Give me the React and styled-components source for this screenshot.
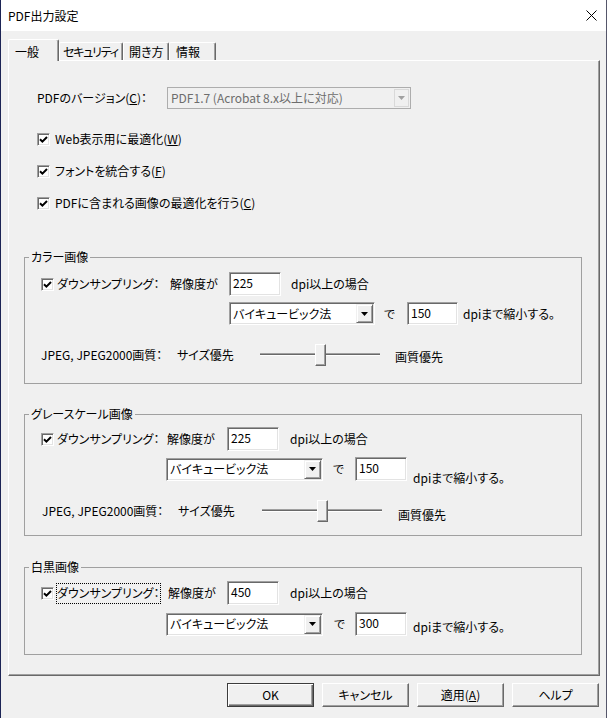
import React from 'react'
import styled, { createGlobalStyle, css } from 'styled-components'

const GlobalStyle = createGlobalStyle`
  html, body { margin: 0; padding: 0; background: #f0f0f0; }
  body {
    font-family: "Noto Sans CJK JP", "Noto Sans", sans-serif;
    font-size: 12px;
    line-height: 16px;
    color: #000;
    font-feature-settings: "palt";
  }
  *, *::before, *::after { box-sizing: border-box; }
`

const Window = styled.div`
  width: 607px;
  height: 718px;
  background: #f0f0f0;
  border-left: 1px solid #1c2455;
  border-right: 1px solid #55566a;
  display: flex;
  flex-direction: column;
  overflow: hidden;
`

const TitleBar = styled.div`
  flex: 0 0 31px;
  background: #fff;
  display: flex;
  align-items: center;
  justify-content: space-between;
  padding: 0 9px 0 7px;
`

const Body = styled.div`
  flex: 1;
  padding: 8px 6px 0 7px;
  display: flex;
  flex-direction: column;
`

const TabStrip = styled.div`
  display: flex;
  align-items: flex-end;
  height: 21px;
`

const Tab = styled.div`
  position: relative;
  z-index: ${p => (p.$active ? 2 : 1)};
  width: ${p => p.$w}px;
  height: ${p => (p.$active ? 22 : 18)}px;
  margin-bottom: ${p => (p.$active ? -1 : 0)}px;
  padding: ${p => (p.$active ? 4 : 1)}px 0 0 ${p => p.$pad}px;
  letter-spacing: ${p => p.$ls || 0}px;
  background: #f0f0f0;
  border-top: 1px solid #fff;
  border-left: 1px solid #fff;
  border-right: 1px solid #696969;
  box-shadow: inset -1px 0 0 #a0a0a0;
  border-radius: 2px 2px 0 0;
  white-space: nowrap;
`

const Panel = styled.div`
  height: 616px;
  border-top: 1px solid #fff;
  border-left: 1px solid #fff;
  border-right: 1px solid #696969;
  border-bottom: 1px solid #696969;
  box-shadow: inset -1px -1px 0 #a0a0a0;
  padding: 26px 0 0 15px;
  display: flex;
  flex-direction: column;
  align-items: flex-start;
`

const VersionRow = styled.div`
  display: flex;
  align-items: center;
  height: 22px;
  margin-left: 13px;
`

const Text = styled.span`
  flex: 0 0 ${p => (p.$w ? `${p.$w}px` : 'auto')};
  margin-left: ${p => p.$ml || 0}px;
  margin-top: ${p => p.$drop || 0}px;
  white-space: nowrap;
  ${p => p.$cover && css`
    height: 22px;
    display: flex;
    align-items: center;
    background: #f0f0f0;
  `}
`

const Combo = styled.div`
  width: ${p => p.$w}px;
  height: ${p => p.$h}px;
  display: flex;
  align-items: stretch;
  ${p => p.$disabled ? css`
    background: #f0f0f0;
    border: 1px solid #adadad;
    color: #6d6d6d;
  ` : css`
    background: #fff;
    border: 1px solid;
    border-color: #a0a0a0 #fff #fff #a0a0a0;
    box-shadow: inset 1px 1px 0 #696969, inset -1px -1px 0 #e3e3e3;
    padding: 1px;
  `}
`

const ComboText = styled.span`
  flex: 1;
  display: flex;
  align-items: center;
  padding-left: ${p => p.$pl}px;
  white-space: nowrap;
  overflow: hidden;
`

const ComboButton = styled.span`
  flex: 0 0 ${p => p.$w}px;
  display: flex;
  align-items: center;
  justify-content: center;
  background: #f0f0f0;
  ${p => p.$disabled ? css`
    margin: 1px;
    border: 1px solid #d9d9d9;
  ` : css`
    border: 1px solid;
    border-color: #f0f0f0 #696969 #696969 #f0f0f0;
    box-shadow: inset 1px 1px 0 #fff, inset -1px -1px 0 #a0a0a0;
  `}
`

const CheckList = styled.div`
  display: flex;
  flex-direction: column;
  gap: 16px;
  margin: 22px 0 0 13px;
`

const CheckRow = styled.label`
  display: flex;
  align-items: center;
  gap: ${p => p.$gap}px;
  height: 16px;
  flex: 0 0 ${p => (p.$w ? `${p.$w}px` : 'auto')};
  white-space: nowrap;
`

const Box = styled.span`
  flex: 0 0 13px;
  width: 13px;
  height: 13px;
  display: flex;
  align-items: center;
  justify-content: center;
  background: #fff;
  border: 1px solid;
  border-color: #a0a0a0 #fff #fff #a0a0a0;
  box-shadow: inset 1px 1px 0 #696969, inset -1px -1px 0 #e3e3e3;
`

const Focus = styled.span`
  outline: 1px dotted #000;
  outline-offset: 0;
  padding: 1px 1px 2px 0;
`

const Group = styled.fieldset`
  width: 558px;
  min-width: 0;
  margin: ${p => p.$mt}px 0 0 0;
  padding: 0;
  border: 1px solid #a0a0a0;
`

const Legend = styled.legend`
  margin-left: 4px;
  padding: 0 2px;
  line-height: 16px;
`

const GroupBody = styled.div`
  padding: ${p => p.$pt}px 0 ${p => p.$pb}px 16px;
`

const Row = styled.div`
  display: flex;
  align-items: center;
  height: ${p => p.$h}px;
  margin-top: ${p => p.$mt || 0}px;
  padding-left: ${p => p.$indent || 0}px;
`

const Field = styled.div`
  flex: 0 0 ${p => p.$w}px;
  height: ${p => p.$h}px;
  background: #fff;
  border: 1px solid;
  border-color: #a0a0a0 #fff #fff #a0a0a0;
  box-shadow: inset 1px 1px 0 #696969, inset -1px -1px 0 #e3e3e3;
  padding: 2px 0 0 3px;
  line-height: 16px;
`

const Track = styled.div`
  flex: 0 0 120px;
  height: 22px;
  display: flex;
  background: linear-gradient(
    to bottom,
    transparent 9px,
    #a0a0a0 9px, #a0a0a0 10px,
    #696969 10px, #696969 11px,
    #fff 11px, #fff 12px,
    transparent 12px
  );
`

const Thumb = styled.div`
  width: 11px;
  height: 22px;
  margin-left: 55px;
  background: #f0f0f0;
  border: 1px solid;
  border-color: #fff #696969 #696969 #fff;
  box-shadow: inset -1px -1px 0 #a0a0a0;
`

const ButtonRow = styled.div`
  display: flex;
  justify-content: flex-end;
  gap: 8px;
  margin-top: 7px;
  padding-right: 1px;
`

const Btn = styled.button`
  width: 87px;
  height: 24px;
  padding: 0;
  font: inherit;
  color: #000;
  background: #f0f0f0;
  border: 1px solid;
  border-color: #fff #696969 #696969 #fff;
  box-shadow: inset -1px -1px 0 #a0a0a0;
  ${p => p.$default && css`
    border-color: #3c3c3c;
    box-shadow: inset 1px 1px 0 #fff, inset -1px -1px 0 #696969, inset -2px -2px 0 #a0a0a0;
  `}
`

const Arrow = ({ color = '#000' }) => (
  <svg width="7" height="4" viewBox="0 0 7 4">
    <polygon points="0,0 7,0 3.5,4" fill={color} />
  </svg>
)

const Check = () => (
  <Box>
    <svg width="9" height="9" viewBox="0 0 9 9">
      <path d="M1 4.2 L3.4 6.6 L8 2" fill="none" stroke="#000" strokeWidth="2" />
    </svg>
  </Box>
)

const Select = ({ w, h = 23, children }) => (
  <Combo $w={w} $h={h}>
    <ComboText $pl={2}>{children}</ComboText>
    <ComboButton $w={17}><Arrow /></ComboButton>
  </Combo>
)

const Slider = () => (
  <Track>
    <Thumb />
  </Track>
)

const tabs = [
  { label: '一般', w: 51, pad: 6, active: true },
  { label: 'セキュリティ', w: 64, pad: 3, ls: -1.2 },
  { label: '開き方', w: 46, pad: 5 },
  { label: '情報', w: 47, pad: 6 },
]

const App = () => {
  return (
    <>
      <GlobalStyle />
      <Window>
        <TitleBar>
          <span>PDF出力設定</span>
          <svg width="11" height="11" viewBox="0 0 11 11">
            <path d="M0.5 0.5 L10.5 10.5 M10.5 0.5 L0.5 10.5" stroke="#000" strokeWidth="1" />
          </svg>
        </TitleBar>

        <Body>
          <TabStrip>
            {tabs.map(t => (
              <Tab key={t.label} $w={t.w} $pad={t.pad} $ls={t.ls} $active={t.active}>{t.label}</Tab>
            ))}
          </TabStrip>

          <Panel>
            <VersionRow>
              <Text $w={130}>PDFのバージョン(<u>C</u>)：</Text>
              <Combo $w={244} $h={22} $disabled>
                <ComboText $pl={3}>PDF1.7 (Acrobat 8.x以上に対応)</ComboText>
                <ComboButton $w={15} $disabled><Arrow color="#a0a0a0" /></ComboButton>
              </Combo>
            </VersionRow>

            <CheckList>
              <CheckRow $gap={5}><Check /><span>Web表示用に最適化(<u>W</u>)</span></CheckRow>
              <CheckRow $gap={5}><Check /><span>フォントを統合する(<u>F</u>)</span></CheckRow>
              <CheckRow $gap={5}><Check /><span>PDFに含まれる画像の最適化を行う(<u>C</u>)</span></CheckRow>
            </CheckList>

            {/* カラー画像 */}
            <Group $mt={38}>
              <Legend>カラー画像</Legend>
              <GroupBody $pt={7} $pb={17}>
                <Row $h={24}>
                  <CheckRow $gap={3} $w={129}><Check /><span>ダウンサンプリング：</span></CheckRow>
                  <Text $w={59}>解像度が</Text>
                  <Field $w={52} $h={24}>225</Field>
                  <Text $ml={10}>dpi以上の場合</Text>
                </Row>
                <Row $h={23} $mt={6} $indent={188}>
                  <Select w={158}>バイキュービック法</Select>
                  <Text $w={23} $ml={9}>で</Text>
                  <Field $w={51} $h={23}>150</Field>
                  <Text $w={118} $ml={5} $cover>dpiまで縮小する。</Text>
                </Row>
                <Row $h={22} $mt={19}>
                  <Text $w={136}>JPEG, JPEG2000画質：</Text>
                  <Text $w={83}>サイズ優先</Text>
                  <Slider />
                  <Text $ml={15} $drop={4}>画質優先</Text>
                </Row>
              </GroupBody>
            </Group>

            {/* グレースケール画像 */}
            <Group $mt={22}>
              <Legend>グレースケール画像</Legend>
              <GroupBody $pt={5} $pb={13}>
                <Row $h={24}>
                  <CheckRow $gap={3} $w={126}><Check /><span>ダウンサンプリング：</span></CheckRow>
                  <Text $w={60}>解像度が</Text>
                  <Field $w={52} $h={24}>225</Field>
                  <Text $ml={11}>dpi以上の場合</Text>
                </Row>
                <Row $h={24} $mt={6} $indent={125}>
                  <Select w={157}>バイキュービック法</Select>
                  <Text $w={22} $ml={10}>で</Text>
                  <Field $w={52} $h={24}>150</Field>
                  <Text $ml={6} $drop={18}>dpiまで縮小する。</Text>
                </Row>
                <Row $h={22} $mt={19}>
                  <Text $w={136} $ml={1}>JPEG, JPEG2000画質：</Text>
                  <Text $w={84}>サイズ優先</Text>
                  <Slider />
                  <Text $ml={16} $drop={8}>画質優先</Text>
                </Row>
              </GroupBody>
            </Group>

            {/* 白黒画像 */}
            <Group $mt={23}>
              <Legend>白黒画像</Legend>
              <GroupBody $pt={6} $pb={18}>
                <Row $h={24}>
                  <CheckRow $gap={3} $w={127}><Check /><Focus>ダウンサンプリング：</Focus></CheckRow>
                  <Text $w={59}>解像度が</Text>
                  <Field $w={52} $h={24}>450</Field>
                  <Text $ml={11}>dpi以上の場合</Text>
                </Row>
                <Row $h={24} $mt={7} $indent={125}>
                  <Select w={157}>バイキュービック法</Select>
                  <Text $w={21} $ml={11}>で</Text>
                  <Field $w={52} $h={24}>300</Field>
                  <Text $ml={6} $drop={6}>dpiまで縮小する。</Text>
                </Row>
              </GroupBody>
            </Group>
          </Panel>

          <ButtonRow>
            <Btn $default>OK</Btn>
            <Btn>キャンセル</Btn>
            <Btn>適用(<u>A</u>)</Btn>
            <Btn>ヘルプ</Btn>
          </ButtonRow>
        </Body>
      </Window>
    </>
  )
}

export default App
